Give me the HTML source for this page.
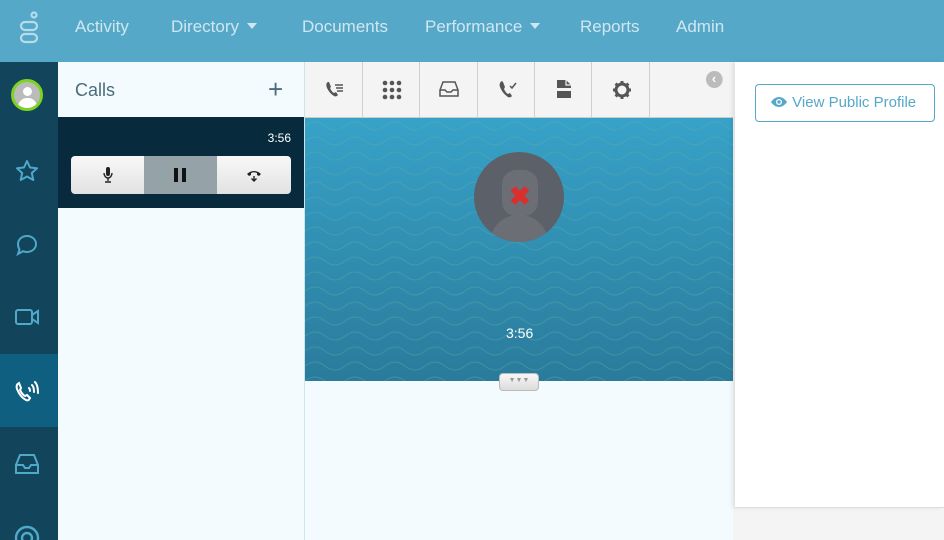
<!DOCTYPE html>
<html><head><style>
*{margin:0;padding:0;box-sizing:border-box}
html,body{width:944px;height:540px;overflow:hidden}
body{font-family:"Liberation Sans",sans-serif;background:#f4f4f4;position:relative}
.top{position:absolute;left:0;top:0;width:944px;height:62px;background:#56a8c8}
.top span{position:absolute;top:17px;font-size:17px;color:#cfe7f1}
.caret{display:inline-block;width:0;height:0;border-left:5px solid transparent;border-right:5px solid transparent;border-top:6px solid #cfe7f1;margin-left:8px;vertical-align:3px}
.side{position:absolute;left:0;top:62px;width:58px;height:478px;background:#12445c;overflow:hidden}
.act{position:absolute;left:0;top:292px;width:58px;height:73px;background:#0f5f80}
.calls{position:absolute;left:58px;top:62px;width:247px;height:478px;background:#f3fbff;border-right:1px solid #cfe3ea}
.mid{position:absolute;left:305px;top:62px;width:428px;height:478px;background:#f3fbff}
.tb{position:absolute;left:0;top:0;width:428px;height:56px;background:#f4f4f4;border-bottom:1px solid #ccc}
.tb div{position:absolute;top:0;height:55px;border-right:1px solid #d0d0d0}
.vid{position:absolute;left:0;top:56px;width:428px;height:263px;background:linear-gradient(#37a2c8,#2a7b9b);overflow:hidden}
.right{position:absolute;left:735px;top:62px;width:209px;height:446px;background:#fff;border-bottom:1px solid #ddd;box-shadow:-3px 0 4px rgba(0,0,0,.08)}
</style></head><body>
<div class="top">
<svg style="position:absolute;left:18px;top:11px" width="22" height="34" viewBox="0 0 22 34" fill="none" stroke="#b5dcea" stroke-width="2.2"><circle cx="16" cy="4" r="2.5"/><rect x="3" y="11" width="16" height="8" rx="4"/><rect x="3" y="23" width="16" height="8" rx="4"/></svg>
<span style="left:75px">Activity</span>
<span style="left:171px">Directory<i class="caret"></i></span>
<span style="left:302px">Documents</span>
<span style="left:425px">Performance<i class="caret"></i></span>
<span style="left:580px">Reports</span>
<span style="left:676px">Admin</span>
</div>
<div class="side">
<div class="act"></div>
<div style="position:absolute;left:11px;top:17px;width:32px;height:32px;border-radius:50%;border:3px solid #7ed321;background:#bbb;overflow:hidden"><div style="position:absolute;left:9px;top:5px;width:9px;height:9px;border-radius:50%;background:#fff"></div><div style="position:absolute;left:4px;top:16px;width:19px;height:14px;border-radius:9px 9px 0 0;background:#fff"></div></div>
<svg style="position:absolute;left:15px;top:97px" width="24" height="24" viewBox="0 0 24 24" fill="none" stroke="#4fa9c9" stroke-width="2" stroke-linejoin="round"><path d="M12 2l3 6.5 7 .8-5.2 4.7 1.5 7L12 17.5 5.7 21l1.5-7L2 9.3l7-.8z"/></svg>
<svg style="position:absolute;left:15px;top:171px" width="24" height="24" viewBox="0 0 24 24" fill="none" stroke="#4fa9c9" stroke-width="2"><path d="M12 3c5 0 9 3.5 9 8s-4 8-9 8c-1.5 0-3-.3-4-.8L3 21l1.5-4.5C3.5 15 3 13 3 11c0-4.5 4-8 9-8z"/></svg>
<svg style="position:absolute;left:14px;top:245px" width="26" height="20" viewBox="0 0 26 20" fill="none" stroke="#4fa9c9" stroke-width="2"><rect x="2" y="3" width="16" height="14" rx="2"/><path d="M18 8l6-4v12l-6-4"/></svg>
<svg style="position:absolute;left:14px;top:316px" width="26" height="26" viewBox="0 0 26 26" fill="none" stroke="#fff" stroke-width="2" stroke-linecap="round"><path d="M5 5c-2 1-3 3-2 6 2 5 5 9 9 11 2 1 3 0 4-2l-3-3-2 1c-2-1-4-4-5-6l1-2-2-5z"/><path d="M15 10c1 1 1 2 1 3M18 7c2 2 2 5 2 7M21 4c3 3 3 8 3 11"/></svg>
<svg style="position:absolute;left:14px;top:391px" width="26" height="22" viewBox="0 0 26 22" fill="none" stroke="#4fa9c9" stroke-width="2"><path d="M6 2h14l4 10v8H2v-8z"/><path d="M2 12h7l2 3h4l2-3h7"/></svg>
<svg style="position:absolute;left:14px;top:463px" width="26" height="26" viewBox="0 0 26 26" fill="none" stroke="#4fa9c9" stroke-width="2.4"><circle cx="13" cy="13" r="11"/><circle cx="13" cy="13" r="5"/></svg>
</div>
<div class="calls">
<div style="position:absolute;left:17px;top:18px;font-size:18px;color:#4e6b7b">Calls</div>
<div style="position:absolute;left:210px;top:12px;font-size:26px;color:#4e6b7b;font-weight:300">+</div>
<div style="position:absolute;left:0;top:55px;width:246px;height:91px;background:#072a3d">
<div style="position:absolute;right:13px;top:14px;font-size:12px;color:#fff">3:56</div>
<div style="position:absolute;left:13px;top:39px;width:220px;height:38px;border-radius:4px;background:linear-gradient(#f8f8f8,#e2e2e2);overflow:hidden">
<div style="position:absolute;left:73px;top:0;width:73px;height:38px;background:#95a3a9"></div>
<svg style="position:absolute;left:31px;top:10px" width="12" height="18" viewBox="0 0 12 18"><rect x="4" y="1" width="4" height="9" rx="2" fill="#222"/><path d="M2 7c0 3 2 5 4 5s4-2 4-5M6 12v3M3 16h6" stroke="#222" fill="none" stroke-width="1.4"/></svg>
<div style="position:absolute;left:103px;top:12px;width:4px;height:14px;background:#111"></div><div style="position:absolute;left:111px;top:12px;width:4px;height:14px;background:#111"></div>
<svg style="position:absolute;left:175px;top:12px" width="16" height="14" viewBox="0 0 16 14"><path d="M1 6c4-4 10-4 14 0l-2 2-2-1V5c-2-1-4-1-6 0v2L3 8z" fill="#222"/><path d="M8 8v5M5.5 10.5L8 13l2.5-2.5" stroke="#222" fill="none" stroke-width="1.4"/></svg>
</div></div>
</div>
<div class="mid">
<div class="tb">
<div style="left:0;width:58px"></div><div style="left:58px;width:57px"></div><div style="left:115px;width:58px"></div><div style="left:173px;width:57px"></div><div style="left:230px;width:57px"></div><div style="left:287px;width:58px"></div>
<svg style="position:absolute;left:20px;top:18px" width="20" height="18" viewBox="0 0 20 18"><path d="M3 2c-2 1-2 3-1 6 2 4 4 6 7 8 2 1 3 0 4-1l-2-3-2 1c-2-1-3-3-4-5l1-1-2-5z" fill="#555"/><path d="M10 5h8M11 8h7M12 11h6" stroke="#555" stroke-width="1.5"/></svg>
<svg style="position:absolute;left:77px;top:18px" width="20" height="20" fill="#555"><circle cx="3" cy="3" r="2.3"/><circle cx="10" cy="3" r="2.3"/><circle cx="17" cy="3" r="2.3"/><circle cx="3" cy="10" r="2.3"/><circle cx="10" cy="10" r="2.3"/><circle cx="17" cy="10" r="2.3"/><circle cx="3" cy="17" r="2.3"/><circle cx="10" cy="17" r="2.3"/><circle cx="17" cy="17" r="2.3"/></svg>
<svg style="position:absolute;left:134px;top:19px" width="20" height="16" viewBox="0 0 20 16" fill="none" stroke="#555" stroke-width="1.5"><path d="M4 1h12l3 8v6H1V9z"/><path d="M1 9h5l2 2h4l2-2h5"/></svg>
<svg style="position:absolute;left:193px;top:17px" width="20" height="20" viewBox="0 0 20 20"><path d="M4 2c-2 1-3 3-2 6 2 5 5 8 8 10 2 1 3 0 4-1l-2-3-2 1c-2-1-3-3-4-5l1-2-2-5z" fill="#555"/><path d="M12 7l2 2 4-5" stroke="#555" fill="none" stroke-width="1.5"/></svg>
<svg style="position:absolute;left:251px;top:17px" width="16" height="20" viewBox="0 0 16 20"><path d="M1 1h9l5 5v13H1z" fill="#555"/><path d="M10 1v5h5" fill="none" stroke="#f4f4f4" stroke-width="1.2"/><rect x="0" y="9" width="16" height="3" fill="#f4f4f4"/></svg>
<svg style="position:absolute;left:307px;top:18px" width="20" height="20" viewBox="0 0 20 20"><circle cx="10" cy="10" r="6" fill="none" stroke="#555" stroke-width="3"/><g stroke="#555" stroke-width="3"><path d="M10 1v4M10 15v4M1 10h4M15 10h4M3.6 3.6l2.8 2.8M13.6 13.6l2.8 2.8M3.6 16.4l2.8-2.8M13.6 6.4l2.8-2.8"/></g></svg>
<div style="position:absolute;left:401px;top:9px;width:17px;height:17px;border-radius:50%;background:#bbb;color:#fff;font-size:13px;line-height:16px;text-align:center;font-weight:bold">‹</div>
</div>
<div class="vid">
<svg width="428" height="263" style="position:absolute;left:0;top:0"><defs><pattern id="w" width="40" height="15" patternUnits="userSpaceOnUse"><path d="M0 8 Q10 0 20 8 T40 8" fill="none" stroke="#5fb0a8" stroke-opacity=".4" stroke-width="1"/></pattern></defs><rect width="428" height="263" fill="url(#w)"/></svg>
<div style="position:absolute;left:169px;top:34px;width:90px;height:90px;border-radius:50%;background:#5c6068;overflow:hidden">
<div style="position:absolute;left:28px;top:18px;width:36px;height:46px;border-radius:14px;background:#6b6e75"></div>
<div style="position:absolute;left:16px;top:63px;width:58px;height:40px;border-radius:28px 28px 0 0;background:#6b6e75"></div>
<div style="position:absolute;left:35px;top:31px;font-size:26px;color:#d9302d;font-weight:bold;line-height:26px">✖</div>
</div>
<div style="position:absolute;left:201px;top:207px;font-size:14px;color:#fff">3:56</div>
</div>
<div style="position:absolute;left:194px;top:311px;width:40px;height:18px;border-radius:4px;background:linear-gradient(#f7f7f7,#dcdcdc);border:1px solid #bbb;font-size:7px;color:#999;text-align:center;line-height:14px">▼▼▼</div>
</div>
<div class="right">
<div style="position:absolute;left:20px;top:22px;width:180px;height:38px;border:1px solid #56a8c8;border-radius:4px;color:#56a8c8;font-size:15px;line-height:36px;padding-left:14px">
<svg width="18" height="12" viewBox="0 0 18 12" style="vertical-align:-1px"><path d="M1 6c2-3 5-5 8-5s6 2 8 5c-2 3-5 5-8 5S3 9 1 6z" fill="#56a8c8"/><circle cx="9" cy="6" r="3" fill="#fff"/><circle cx="9" cy="6" r="1.7" fill="#56a8c8"/></svg> View Public Profile</div>
</div>
</body></html>
